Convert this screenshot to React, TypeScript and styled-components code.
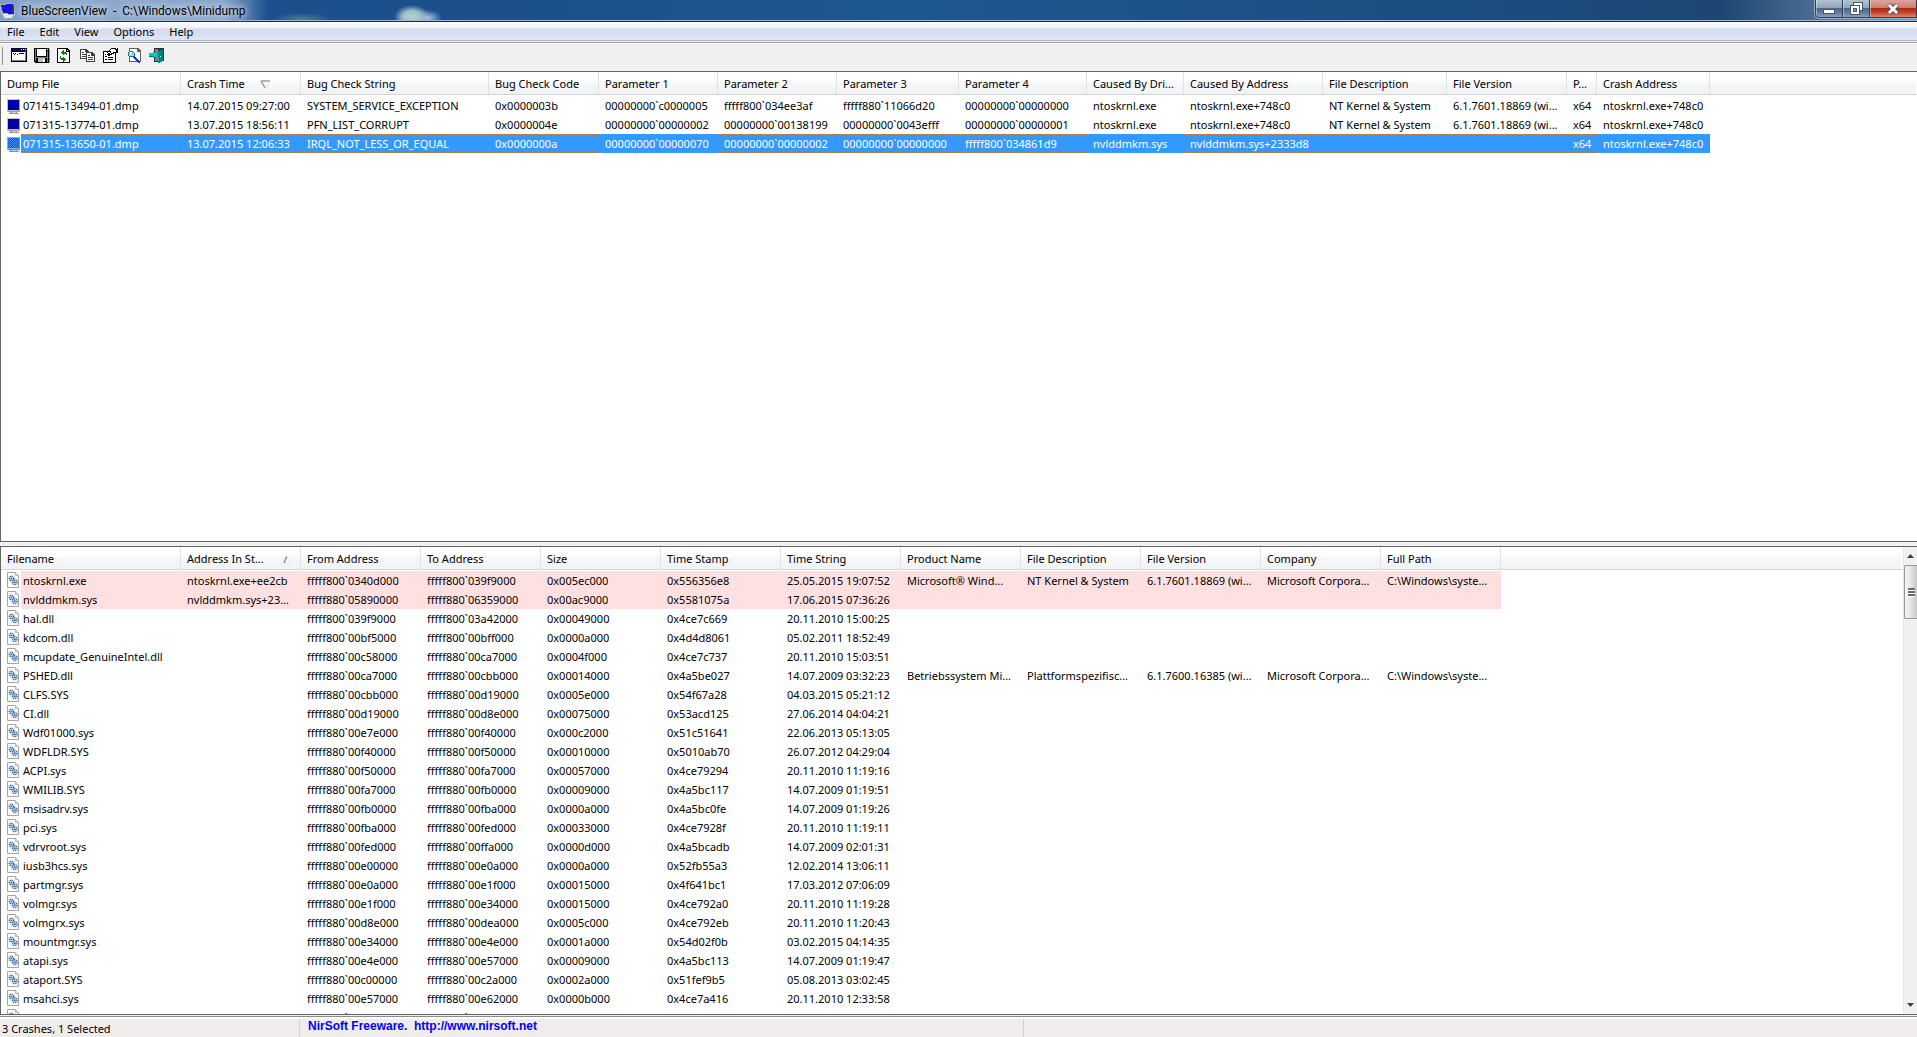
import React from 'react';
import styled, { createGlobalStyle, css } from 'styled-components';

const GlobalStyle = createGlobalStyle`
  *, *::before, *::after { box-sizing: border-box; }
  html, body, #root { height: 100%; }
  body {
    margin: 0;
    overflow: hidden;
    background: #f0f0f0;
    color: #000;
    font: 11px/16px "Noto Sans", "Open Sans", sans-serif;
    cursor: default;
  }
  button { font: inherit; color: inherit; border: 0; padding: 0; background: none; }
`;

const Window = styled.div`
  display: flex;
  flex-direction: column;
  height: 100vh;
  min-height: 400px;
`;

const TitleBar = styled.header`
  flex: none;
  display: flex;
  align-items: flex-start;
  justify-content: space-between;
  height: 22px;
  border-bottom: 1px solid #1b2d49;
  box-shadow: inset 0 -1px 0 #9fb6d6;
  background:
    radial-gradient(ellipse 18px 12px at 412px 17px, #b4cfcf 0%, #9fc0cc 50%, transparent 100%),
    radial-gradient(ellipse 14px 8px at 428px 18px, #a9c3e0 0%, transparent 100%),
    radial-gradient(ellipse 30px 6px at 302px 19px, #4f7f86 0%, transparent 100%),
    linear-gradient(90deg, #7f9cc4 0, #8ea8cb 60px, #8aa5c9 225px, #1d4f8e 268px, #1c4f8c 500px, #1f5791 900px, #1c4c80 1500px, #1d4672 1720px, #7d97b3 100%);
`;

const Caption = styled.div`
  display: flex;
  align-items: center;
  gap: 4px;
  height: 20px;
`;

const Title = styled.h1`
  margin: 0;
  padding-top: 2px;
  font: 12px/20px Roboto, "Noto Sans", sans-serif;
  white-space: pre;
  text-shadow: 0 0 6px #dfe8f5, 0 0 10px #dfe8f5;
`;

const WindowButtons = styled.div`
  display: flex;
  height: 18px;
  border: 1px solid #2b3c52;
  border-top: 0;
  border-right: 0;
  border-radius: 0 0 0 5px;
  overflow: hidden;
  box-shadow: 0 0 0 1px #9db2c8;
`;

const WindowButton = styled.button<{ $kind?: 'close' }>`
  display: grid;
  place-items: center;
  width: ${(p) => (p.$kind === 'close' ? 47 : 27)}px;
  border-right: 1px solid #2b3c52;
  background: ${(p) =>
    p.$kind === 'close'
      ? 'linear-gradient(#d9a79c 0, #cf7f70 44%, #b02a12 50%, #c4472f 75%, #d98a74 100%)'
      : 'linear-gradient(#b5c3d2 0, #92a6bb 44%, #4d6a89 50%, #5f7d9b 75%, #8aa5bd 100%)'};
  box-shadow: inset 1px 0 0 #ffffff66;
`;

const MenuBar = styled.nav`
  flex: none;
  display: flex;
  gap: 1px;
  height: 20px;
  border-bottom: 1px solid #f0f0f3;
  box-shadow: inset 0 -1px 0 #b3b8ca;
  background: linear-gradient(#fff 0, #eef1f8 6px, #d4dbec 7px, #e0e6f6 18px);
`;

const MenuItem = styled.button`
  padding: 0 7px;
  height: 19px;
  line-height: 19px;
`;

const Toolbar = styled.div`
  flex: none;
  display: flex;
  align-items: flex-start;
  gap: 7px;
  height: 29px;
  padding: 4px 2px 0;
  border-top: 1px solid #a0a0a0;
  box-shadow: inset 0 1px 0 #fff;
`;

const Grip = styled.span`
  width: 1px;
  height: 18px;
  background: #8c8c8c;
`;

const ToolButtons = styled.div`
  display: flex;
  gap: 7px;
  padding-left: 1px;
`;

const ToolButton = styled.button`
  display: block;
  width: 16px;
  height: 17px;
`;

const Glyph = styled.svg`
  display: block;
  shape-rendering: crispEdges;
`;

const Panes = styled.main`
  flex: 1;
  min-height: 0;
  display: flex;
  flex-direction: column;
  gap: 4px;
`;

const Pane = styled.section<{ $share: number }>`
  flex: ${(p) => p.$share} 1 0;
  min-height: 0;
  display: flex;
  border: 1px solid #646464;
  border-right: 0;
  background: #fff;
`;

const ListArea = styled.div`
  flex: 1;
  min-width: 0;
  overflow: hidden;
`;

const Table = styled.table`
  width: 100%;
  table-layout: fixed;
  border-collapse: separate;
  border-spacing: 0;
`;

const Col = styled.col<{ $w?: number }>`
  width: ${(p) => (p.$w ? `${p.$w}px` : 'auto')};
`;

const HeadCell = styled.th<{ $last?: boolean }>`
  height: 23px;
  padding: 0 6px;
  border-right: 1px solid ${(p) => (p.$last ? 'transparent' : '#dfe1e4')};
  border-bottom: 1px solid #d5d5d5;
  background: linear-gradient(#fff 0, #fff 9px, #f7f8fa 10px, #f1f2f4 22px);
  background-clip: padding-box;
  font-weight: 400;
  text-align: left;
  white-space: nowrap;
  overflow: hidden;
`;

const HeadLabel = styled.span<{ $sort?: 'up' | 'down' }>`
  display: flex;
  align-items: center;
  justify-content: ${(p) => (p.$sort === 'up' ? 'space-between' : 'flex-start')};
  gap: 15px;
  height: 22px;
  padding-top: 2px;
  padding-right: ${(p) => (p.$sort === 'up' ? 3 : 0)}px;
`;

const Gap = styled.tbody`
  td { height: 1px; padding: 0; }
`;

type Tone = 'plain' | 'selected' | 'stack';

const fill = { plain: 'transparent', selected: '#3399ff', stack: '#ffe0e0' };

const dotted = css`
  border-top: 1px dotted #b8824a;
  border-bottom: 1px dotted #b8824a;
`;

const Cell = styled.td<{ $tone: Tone }>`
  height: 19px;
  padding: 0 0 0 6px;
  background: ${(p) => fill[p.$tone]};
  color: ${(p) => (p.$tone === 'selected' ? '#fff' : '#000')};
  line-height: 17px;
  white-space: nowrap;
  overflow: hidden;
  ${(p) => p.$tone === 'selected' && dotted}
`;

const NameCell = styled.td`
  height: 19px;
  padding: 0 0 0 6px;
`;

const NameBox = styled.div`
  display: flex;
  align-items: center;
  height: 19px;
`;

const NameLabel = styled.span<{ $tone: Tone }>`
  flex: 1;
  height: 19px;
  padding-left: 2px;
  background: ${(p) => fill[p.$tone]};
  color: ${(p) => (p.$tone === 'selected' ? '#fff' : '#000')};
  line-height: ${(p) => (p.$tone === 'selected' ? 17 : 19)}px;
  white-space: nowrap;
  ${(p) => p.$tone === 'selected' && dotted}
`;

const Scrollbar = styled.div`
  flex: none;
  display: flex;
  flex-direction: column;
  width: 14px;
  border-left: 1px solid #e6e6e6;
  background: #f0f0f0;
`;

const ScrollArrow = styled.button`
  flex: none;
  display: grid;
  place-items: center;
  height: 18px;
`;

const Track = styled.div`
  flex: 1;
`;

const Thumb = styled.div`
  display: grid;
  place-items: center;
  height: 54px;
  border: 1px solid #979797;
  border-right: 0;
  border-radius: 2px 0 0 2px;
  background: linear-gradient(90deg, #f6f6f6, #e6e6e8 45%, #c6c8cb);
`;

const StatusBar = styled.footer`
  flex: none;
  display: flex;
  height: 21px;
  margin-top: 1px;
  padding-top: 2px;
  border-top: 1px solid #8c8c8c;
  box-shadow: inset 0 2px 0 #fff;
  background: #f0eceb;
`;

const StatusPart = styled.div<{ $w?: number }>`
  flex: ${(p) => (p.$w ? `0 0 ${p.$w}px` : '1')};
  border-right: ${(p) => (p.$w ? '1px solid #d2cfce' : '0')};
`;

const StatusText = styled.span`
  display: block;
  padding: 2px 0 0 2px;
`;

const HomeLink = styled.a`
  display: block;
  padding-left: 8px;
  color: #0000ff;
  font: bold 12px/14px "Liberation Sans", Arial, sans-serif;
  text-decoration: none;
  white-space: pre;
`;

const AppIcon = () => (
  <Glyph width="17" height="18" viewBox="0 0 17 18" aria-hidden="true">
    <path d="M0 3L11 2L15 4V14L12 17L4 18L2 14L0 12Z" fill="#aab2bd" />
    <path d="M1 4L11 3L13 13L3 12Z" fill="#1414e6" />
    <path d="M3 13L13 14L12 17H5Z" fill="#e8e8e4" />
    <path d="M11 3L14 4V12L13 13Z" fill="#27316a" />
  </Glyph>
);

const DumpIcon = ({ selected }: { selected: boolean }) => (
  <Glyph width="14" height="16" viewBox="0 0 14 16" aria-hidden="true">
    <path d="M0 1H13V14H0Z" fill={selected ? '#78aee6' : '#c3bfb8'} />
    <path d="M12 2H13V14H1V13H12Z" fill={selected ? '#5b91d2' : '#a39f98'} />
    <path d="M1 2H12V12H1Z" fill={selected ? '#1a4fcd' : '#0000a0'} />
    {selected && (
      <>
        <path d="M1 2.500H12M1 4.500H12M1 6.500H12M1 8.500H12M1 10.500H12" stroke="#3c8df5" strokeDasharray="1 1" />
        <path d="M2 3.500H12M2 5.500H12M2 7.500H12M2 9.500H12M2 11.500H12" stroke="#3c8df5" strokeDasharray="1 1" />
      </>
    )}
    <path d="M3 14H10V15H12V16H2V15H3Z" fill={selected ? '#5b9ae0' : '#9d9992'} />
    <path d="M5 14H9V15H5Z" fill={selected ? '#a8ccf2' : '#d9d6d0'} />
  </Glyph>
);

const ModuleIcon = () => (
  <svg width="14" height="17" viewBox="0 0 14 17" aria-hidden="true">
    <path d="M0.500 0.500H8.500L11.500 3.500V15.500H0.500Z" fill="#fbfbfb" stroke="#a5a5a5" />
    <path d="M8.500 0.500V3.500H11.500" fill="#e4e4e4" stroke="#b8b8b8" />
    <circle cx="4.500" cy="6.500" r="2.200" fill="#cfe0f0" stroke="#3c6c9e" strokeWidth="1.400" strokeDasharray="1.200 0.700" />
    <circle cx="7.800" cy="10.200" r="2.400" fill="#cfe0f0" stroke="#3c6c9e" strokeWidth="1.400" strokeDasharray="1.200 0.700" />
    <circle cx="4.500" cy="6.500" r="0.800" fill="#2f5f92" />
    <circle cx="7.800" cy="10.200" r="0.900" fill="#2f5f92" />
  </svg>
);

const toolIcons: { label: string; art: React.ReactNode }[] = [
  {
    label: 'Advanced Options',
    art: (
      <>
        <path d="M0 1H16V15H0Z" fill="#000" />
        <path d="M1 5H14V13H1Z" fill="#fff" />
        <path d="M1 2H15V4H1Z" fill="#000080" />
        <path d="M10 2H11V3H10ZM12 2H13V3H12ZM14 2H15V3H14Z" fill="#fff" />
        <path d="M14 4H15V14H1V13H14Z" fill="#808080" />
        <path d="M2 6H3V7H2ZM4 6H5V7H4ZM6 7H7V8H6ZM8 6H13V7H8ZM3 7H4V8H3Z" fill="#000" />
      </>
    ),
  },
  {
    label: 'Save Selected Items',
    art: (
      <>
        <path d="M0 1H15V16H1V15H0Z" fill="#000" />
        <path d="M1 2H2V14H1ZM13 4H14V15H13ZM1 10H14V11H1Z" fill="#808080" />
        <path d="M3 2H12V9H3Z" fill="#fff" />
        <path d="M13 2H14V3H13Z" fill="#fff" />
        <path d="M4 11H11V15H4Z" fill="#c0c0c0" />
        <path d="M9 12H11V15H9Z" fill="#fff" />
        <path d="M15 2H16V16H15Z" fill="#8c8c8c" />
      </>
    ),
  },
  {
    label: 'Refresh',
    art: (
      <>
        <path d="M0 1H10L13 4V16H0Z" fill="#000" />
        <path d="M1 2H9V5H12V15H1Z" fill="#fff" />
        <path d="M10 3H11V4H10Z" fill="#fff" />
        <path d="M5 4H6V3H7V5H9V6H10V8H9V7H7V8H6V7H5V6H4V5H5Z" fill="#008000" />
        <path d="M3 9H4V11H6V10H7V11H8V12H9V13H8V14H7V15H6V13H4V12H3Z" fill="#008000" />
      </>
    ),
  },
  {
    label: 'Copy Selected Items',
    art: (
      <>
        <path d="M0 2H6L9 5V12H0Z" fill="#404040" />
        <path d="M1 3H5V5H8V11H1Z" fill="#fff" />
        <path d="M2 5H4V6H2ZM2 7H6V8H2ZM2 9H6V10H2Z" fill="#404040" />
        <path d="M6 5H12L15 8V15H6Z" fill="#404040" />
        <path d="M7 6H11V9H14V14H7Z" fill="#fff" />
        <path d="M8 8H10V9H8ZM8 10H13V11H8ZM8 12H13V13H8Z" fill="#404040" />
      </>
    ),
  },
  {
    label: 'Properties',
    art: (
      <>
        <path d="M0 4H13V16H0Z" fill="#000" />
        <path d="M1 5H12V15H1Z" fill="#fff" />
        <path d="M4 4H6V3H7V2H8V1H13V2H14V6H11V7H9V8H7V9H5V8H4V7H5V6H4Z" fill="#000" />
        <path d="M7 3H8V2H12V3H13V5H10V6H8V7H7V6H8V4H7ZM5 5H7V6H5Z" fill="#fff" />
        <path d="M14 1H15V6H14Z" fill="#000080" />
        <path d="M2 7H3V8H2ZM2 9H4V10H2ZM5 10H10V11H5ZM2 12H4V13H2ZM5 12H10V13H5Z" fill="#000" />
      </>
    ),
  },
  {
    label: 'Find',
    art: (
      <>
        <path d="M3 1H12L15 4V15H3Z" fill="#606060" />
        <path d="M4 2H11V5H14V14H4Z" fill="#fff" />
        <path d="M3 4H7V5H8V6H9V9H8V10H3V9H2V5H3Z" fill="#207080" />
        <path d="M3 5H7V6H8V9H3Z" fill="#60f0f8" />
        <path d="M4 5H6V6H5V8H4Z" fill="#fff" />
        <path d="M8 9H9V10H10V11H11V12H12V13H13V14H14V16H12V15H11V14H10V13H9V12H8V11H7V10H8Z" fill="#1040c8" />
      </>
    ),
  },
  {
    label: 'Exit',
    art: (
      <>
        <path d="M5 1H15V14H13V15H5Z" fill="#303030" />
        <path d="M6 2H9V14H6Z" fill="#808080" />
        <path d="M9 4L14 2V14L10 16H9Z" fill="#008080" />
        <path d="M9 4H10V15H9Z" fill="#00a0a0" />
        <path d="M11 9H12V10H11Z" fill="#fff" />
        <path d="M0 6H4V4H5V5H6V6H7V7H8V8H7V9H6V10H5V11H4V9H0Z" fill="#00c8d0" />
        <path d="M0 9H4V10H0Z" fill="#006070" />
      </>
    ),
  },
];

const SortDown = () => (
  <svg width="11" height="9" viewBox="0 0 11 9" aria-hidden="true">
    <path d="M1 1H10M1 1L5 8" stroke="#9a9a9a" strokeWidth="1.500" fill="none" />
    <path d="M10 1L6 8" stroke="#e2e2e2" fill="none" />
  </svg>
);

const SortUp = () => (
  <svg width="8" height="9" viewBox="0 0 8 9" aria-hidden="true">
    <path d="M1 8L4 1" stroke="#8f8f8f" strokeWidth="1.500" fill="none" />
    <path d="M4 1L7 8H2" stroke="#ececec" fill="none" />
  </svg>
);

type Column = { name: string; w: number; sort?: 'up' | 'down' };

const crashColumns: Column[] = [
  { name: 'Dump File', w: 180 },
  { name: 'Crash Time', w: 120, sort: 'down' },
  { name: 'Bug Check String', w: 188 },
  { name: 'Bug Check Code', w: 110 },
  { name: 'Parameter 1', w: 119 },
  { name: 'Parameter 2', w: 119 },
  { name: 'Parameter 3', w: 122 },
  { name: 'Parameter 4', w: 128 },
  { name: 'Caused By Dri...', w: 97 },
  { name: 'Caused By Address', w: 139 },
  { name: 'File Description', w: 124 },
  { name: 'File Version', w: 120 },
  { name: 'P...', w: 30 },
  { name: 'Crash Address', w: 113 },
];

const crashes: string[][] = [
  ['071415-13494-01.dmp', '14.07.2015 09:27:00', 'SYSTEM_SERVICE_EXCEPTION', '0x0000003b', '00000000`c0000005', 'fffff800`034ee3af', 'fffff880`11066d20', '00000000`00000000', 'ntoskrnl.exe', 'ntoskrnl.exe+748c0', 'NT Kernel & System', '6.1.7601.18869 (wi...', 'x64', 'ntoskrnl.exe+748c0'],
  ['071315-13774-01.dmp', '13.07.2015 18:56:11', 'PFN_LIST_CORRUPT', '0x0000004e', '00000000`00000002', '00000000`00138199', '00000000`0043efff', '00000000`00000001', 'ntoskrnl.exe', 'ntoskrnl.exe+748c0', 'NT Kernel & System', '6.1.7601.18869 (wi...', 'x64', 'ntoskrnl.exe+748c0'],
  ['071315-13650-01.dmp', '13.07.2015 12:06:33', 'IRQL_NOT_LESS_OR_EQUAL', '0x0000000a', '00000000`00000070', '00000000`00000002', '00000000`00000000', 'fffff800`034861d9', 'nvlddmkm.sys', 'nvlddmkm.sys+2333d8', '', '', 'x64', 'ntoskrnl.exe+748c0'],
];

const driverColumns: Column[] = [
  { name: 'Filename', w: 180 },
  { name: 'Address In St...', w: 120, sort: 'up' },
  { name: 'From Address', w: 120 },
  { name: 'To Address', w: 120 },
  { name: 'Size', w: 120 },
  { name: 'Time Stamp', w: 120 },
  { name: 'Time String', w: 120 },
  { name: 'Product Name', w: 120 },
  { name: 'File Description', w: 120 },
  { name: 'File Version', w: 120 },
  { name: 'Company', w: 120 },
  { name: 'Full Path', w: 120 },
];

const drivers: string[][] = [
  ['ntoskrnl.exe', 'ntoskrnl.exe+ee2cb', 'fffff800`0340d000', 'fffff800`039f9000', '0x005ec000', '0x556356e8', '25.05.2015 19:07:52', 'Microsoft® Wind...', 'NT Kernel & System', '6.1.7601.18869 (wi...', 'Microsoft Corpora...', 'C:\\Windows\\syste...'],
  ['nvlddmkm.sys', 'nvlddmkm.sys+23...', 'fffff880`05890000', 'fffff880`06359000', '0x00ac9000', '0x5581075a', '17.06.2015 07:36:26'],
  ['hal.dll', '', 'fffff800`039f9000', 'fffff800`03a42000', '0x00049000', '0x4ce7c669', '20.11.2010 15:00:25'],
  ['kdcom.dll', '', 'fffff800`00bf5000', 'fffff800`00bff000', '0x0000a000', '0x4d4d8061', '05.02.2011 18:52:49'],
  ['mcupdate_GenuineIntel.dll', '', 'fffff880`00c58000', 'fffff880`00ca7000', '0x0004f000', '0x4ce7c737', '20.11.2010 15:03:51'],
  ['PSHED.dll', '', 'fffff880`00ca7000', 'fffff880`00cbb000', '0x00014000', '0x4a5be027', '14.07.2009 03:32:23', 'Betriebssystem Mi...', 'Plattformspezifisc...', '6.1.7600.16385 (wi...', 'Microsoft Corpora...', 'C:\\Windows\\syste...'],
  ['CLFS.SYS', '', 'fffff880`00cbb000', 'fffff880`00d19000', '0x0005e000', '0x54f67a28', '04.03.2015 05:21:12'],
  ['CI.dll', '', 'fffff880`00d19000', 'fffff880`00d8e000', '0x00075000', '0x53acd125', '27.06.2014 04:04:21'],
  ['Wdf01000.sys', '', 'fffff880`00e7e000', 'fffff880`00f40000', '0x000c2000', '0x51c51641', '22.06.2013 05:13:05'],
  ['WDFLDR.SYS', '', 'fffff880`00f40000', 'fffff880`00f50000', '0x00010000', '0x5010ab70', '26.07.2012 04:29:04'],
  ['ACPI.sys', '', 'fffff880`00f50000', 'fffff880`00fa7000', '0x00057000', '0x4ce79294', '20.11.2010 11:19:16'],
  ['WMILIB.SYS', '', 'fffff880`00fa7000', 'fffff880`00fb0000', '0x00009000', '0x4a5bc117', '14.07.2009 01:19:51'],
  ['msisadrv.sys', '', 'fffff880`00fb0000', 'fffff880`00fba000', '0x0000a000', '0x4a5bc0fe', '14.07.2009 01:19:26'],
  ['pci.sys', '', 'fffff880`00fba000', 'fffff880`00fed000', '0x00033000', '0x4ce7928f', '20.11.2010 11:19:11'],
  ['vdrvroot.sys', '', 'fffff880`00fed000', 'fffff880`00ffa000', '0x0000d000', '0x4a5bcadb', '14.07.2009 02:01:31'],
  ['iusb3hcs.sys', '', 'fffff880`00e00000', 'fffff880`00e0a000', '0x0000a000', '0x52fb55a3', '12.02.2014 13:06:11'],
  ['partmgr.sys', '', 'fffff880`00e0a000', 'fffff880`00e1f000', '0x00015000', '0x4f641bc1', '17.03.2012 07:06:09'],
  ['volmgr.sys', '', 'fffff880`00e1f000', 'fffff880`00e34000', '0x00015000', '0x4ce792a0', '20.11.2010 11:19:28'],
  ['volmgrx.sys', '', 'fffff880`00d8e000', 'fffff880`00dea000', '0x0005c000', '0x4ce792eb', '20.11.2010 11:20:43'],
  ['mountmgr.sys', '', 'fffff880`00e34000', 'fffff880`00e4e000', '0x0001a000', '0x54d02f0b', '03.02.2015 04:14:35'],
  ['atapi.sys', '', 'fffff880`00e4e000', 'fffff880`00e57000', '0x00009000', '0x4a5bc113', '14.07.2009 01:19:47'],
  ['ataport.SYS', '', 'fffff880`00c00000', 'fffff880`00c2a000', '0x0002a000', '0x51fef9b5', '05.08.2013 03:02:45'],
  ['msahci.sys', '', 'fffff880`00e57000', 'fffff880`00e62000', '0x0000b000', '0x4ce7a416', '20.11.2010 12:33:58'],
  ['PCIIDEX.SYS', '', 'fffff880`00e62000', 'fffff880`00e72000', '0x00010000', '0x4a5bc114', '14.07.2009 01:19:48'],
];

type ListProps = {
  label: string;
  columns: Column[];
  rows: string[][];
  tone: (index: number) => Tone;
  icon: (index: number) => React.ReactNode;
};

function ListView({ label, columns, rows, tone, icon }: ListProps) {
  return (
    <Table aria-label={label}>
      <colgroup>
        {columns.map((c) => (
          <Col key={c.name} $w={c.w} />
        ))}
        <Col />
      </colgroup>
      <thead>
        <tr>
          {columns.map((c) => (
            <HeadCell key={c.name} scope="col">
              <HeadLabel $sort={c.sort}>
                {c.name}
                {c.sort === 'down' && <SortDown />}
                {c.sort === 'up' && <SortUp />}
              </HeadLabel>
            </HeadCell>
          ))}
          <HeadCell as="td" $last />
        </tr>
      </thead>
      <Gap aria-hidden="true">
        <tr>
          <td colSpan={columns.length + 1} />
        </tr>
      </Gap>
      <tbody>
        {rows.map((row, i) => (
          <tr key={row[0]}>
            <NameCell>
              <NameBox>
                {icon(i)}
                <NameLabel $tone={tone(i)}>{row[0]}</NameLabel>
              </NameBox>
            </NameCell>
            {columns.slice(1).map((c, j) => (
              <Cell key={c.name} $tone={tone(i)}>
                {row[j + 1]}
              </Cell>
            ))}
            <td />
          </tr>
        ))}
      </tbody>
    </Table>
  );
}

export default function App() {
  return (
    <>
      <GlobalStyle />
      <Window>
        <TitleBar>
          <Caption>
            <AppIcon />
            <Title>{'BlueScreenView  -  C:\\Windows\\Minidump'}</Title>
          </Caption>
          <WindowButtons>
            <WindowButton aria-label="Minimize">
              <Glyph width="12" height="12" viewBox="0 0 12 12">
                <path d="M0 6H12V11H0Z" fill="#4b5568" />
                <path d="M1 7H11V10H1Z" fill="#fff" />
              </Glyph>
            </WindowButton>
            <WindowButton aria-label="Restore">
              <Glyph width="13" height="13" viewBox="0 0 13 13">
                <path d="M3 0H13V9H10V13H0V3H3Z" fill="#4b5568" />
                <path d="M4 1H12V8H10V3H4Z" fill="#fff" />
                <path d="M1 4H9V12H1Z" fill="#fff" />
                <path d="M3 6H7V10H3Z" fill="#4b5568" />
                <path d="M4 7H6V9H4Z" fill="#8096ae" />
              </Glyph>
            </WindowButton>
            <WindowButton $kind="close" aria-label="Close">
              <svg width="14" height="12" viewBox="0 0 14 12">
                <path d="M3 2L11 10M11 2L3 10" stroke="#4b4a58" strokeWidth="5" />
                <path d="M3 2L11 10M11 2L3 10" stroke="#fff" strokeWidth="3" />
              </svg>
            </WindowButton>
          </WindowButtons>
        </TitleBar>

        <MenuBar>
          {['File', 'Edit', 'View', 'Options', 'Help'].map((m) => (
            <MenuItem key={m}>{m}</MenuItem>
          ))}
        </MenuBar>

        <Toolbar>
          <Grip />
          <ToolButtons>
            {toolIcons.map((t) => (
              <ToolButton key={t.label} aria-label={t.label}>
                <Glyph width="16" height="17" viewBox="0 0 16 17">
                  {t.art}
                </Glyph>
              </ToolButton>
            ))}
          </ToolButtons>
        </Toolbar>

        <Panes>
          <Pane $share={472}>
            <ListArea>
              <ListView
                label="Crashes"
                columns={crashColumns}
                rows={crashes}
                tone={(i) => (i === 2 ? 'selected' : 'plain')}
                icon={(i) => <DumpIcon selected={i === 2} />}
              />
            </ListArea>
          </Pane>
          <Pane $share={469}>
            <ListArea>
              <ListView
                label="Drivers"
                columns={driverColumns}
                rows={drivers}
                tone={(i) => (i < 2 ? 'stack' : 'plain')}
                icon={() => <ModuleIcon />}
              />
            </ListArea>
            <Scrollbar>
              <ScrollArrow aria-label="Scroll up">
                <svg width="7" height="4" viewBox="0 0 7 4">
                  <path d="M0 4L3.500 0L7 4Z" fill="#404040" />
                </svg>
              </ScrollArrow>
              <Track>
                <Thumb>
                  <Glyph width="7" height="9" viewBox="0 0 7 9">
                    <path d="M0 0H7V2H0ZM0 3H7V5H0ZM0 6H7V8H0Z" fill="#6a6a6a" />
                    <path d="M0 2H7V3H0ZM0 5H7V6H0ZM0 8H7V9H0Z" fill="#fff" />
                  </Glyph>
                </Thumb>
              </Track>
              <ScrollArrow aria-label="Scroll down">
                <svg width="7" height="4" viewBox="0 0 7 4">
                  <path d="M0 0L3.500 4L7 0Z" fill="#404040" />
                </svg>
              </ScrollArrow>
            </Scrollbar>
          </Pane>
        </Panes>

        <StatusBar>
          <StatusPart $w={300}>
            <StatusText>3 Crashes, 1 Selected</StatusText>
          </StatusPart>
          <StatusPart $w={724}>
            <HomeLink href="http://www.nirsoft.net">{'NirSoft Freeware.  http://www.nirsoft.net'}</HomeLink>
          </StatusPart>
          <StatusPart />
        </StatusBar>
      </Window>
    </>
  );
}
